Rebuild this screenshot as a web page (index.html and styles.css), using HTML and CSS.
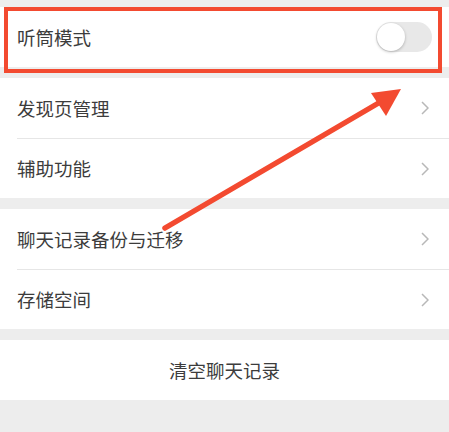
FILE: index.html
```html
<!DOCTYPE html>
<html lang="zh-CN">
<head>
<meta charset="utf-8">
<link rel="stylesheet" href="styles.css">
</head>
<body>
<div class="page">
  <div class="group group-first">
    <div class="row">
      <span class="label">听筒模式</span>
      <span class="switch"><span class="knob"></span></span>
    </div>
  </div>
  <div class="group">
    <div class="row">
      <span class="label">发现页管理</span>
      <svg class="chev" viewBox="0 0 8 14" width="8" height="14"><path d="M1 1 L7 7 L1 13" fill="none" stroke="#b8b8b8" stroke-width="1.5"/></svg>
    </div>
    <div class="row">
      <span class="label">辅助功能</span>
      <svg class="chev" viewBox="0 0 8 14" width="8" height="14"><path d="M1 1 L7 7 L1 13" fill="none" stroke="#b8b8b8" stroke-width="1.5"/></svg>
    </div>
  </div>
  <div class="group">
    <div class="row">
      <span class="label">聊天记录备份与迁移</span>
      <svg class="chev" viewBox="0 0 8 14" width="8" height="14"><path d="M1 1 L7 7 L1 13" fill="none" stroke="#b8b8b8" stroke-width="1.5"/></svg>
    </div>
    <div class="row">
      <span class="label">存储空间</span>
      <svg class="chev" viewBox="0 0 8 14" width="8" height="14"><path d="M1 1 L7 7 L1 13" fill="none" stroke="#b8b8b8" stroke-width="1.5"/></svg>
    </div>
  </div>
  <div class="group">
    <div class="button-row">清空聊天记录</div>
  </div>

  <div class="highlight"></div>
  <svg class="arrow" viewBox="0 0 449 432" width="449" height="432">
    <line x1="165" y1="228" x2="382" y2="101" stroke="#f34a30" stroke-width="5.5" stroke-linecap="round"/>
    <polygon points="401,89 371,93 386,116" fill="#f34a30"/>
  </svg>
</div>
</body>
</html>
```

FILE: styles.css
```css
html, body {
  margin: 0;
  padding: 0;
  background: #ededed;
}
body {
  font-family: "Noto Sans CJK SC", "Noto Sans", sans-serif;
  color: #3c3c3c;
}
.page {
  position: relative;
  width: 449px;
  height: 432px;
  overflow: hidden;
}
.group {
  background: #fff;
  padding-left: 17px;
  margin-top: 11px;
}
.group-first {
  margin-top: 7px;
}
.row {
  height: 60px;
  display: flex;
  align-items: center;
  justify-content: space-between;
  padding-right: 20px;
  box-sizing: border-box;
}
.row + .row {
  border-top: 1px solid #e6e6e6;
}
.label {
  font-size: 18.5px;
  line-height: 1;
}
.switch {
  width: 56px;
  height: 30px;
  border-radius: 15px;
  background: #e8e8e8;
  position: relative;
  margin-right: -3px;
}
.knob {
  position: absolute;
  left: 1px;
  top: 1px;
  width: 28px;
  height: 28px;
  border-radius: 50%;
  background: #fff;
  box-shadow: 0 1px 3px rgba(0,0,0,0.25);
}
.chev {
  display: block;
}
.group:last-of-type {
  margin-top: 10px;
}
.button-row {
  height: 60px;
  margin-left: -17px;
  display: flex;
  align-items: center;
  justify-content: center;
  font-size: 18.5px;
}
.highlight {
  position: absolute;
  left: 4px;
  top: 7px;
  width: 438px;
  height: 66px;
  box-sizing: border-box;
  border: 4.5px solid #f34a30;
}
.arrow {
  position: absolute;
  left: 0;
  top: 0;
}
```
